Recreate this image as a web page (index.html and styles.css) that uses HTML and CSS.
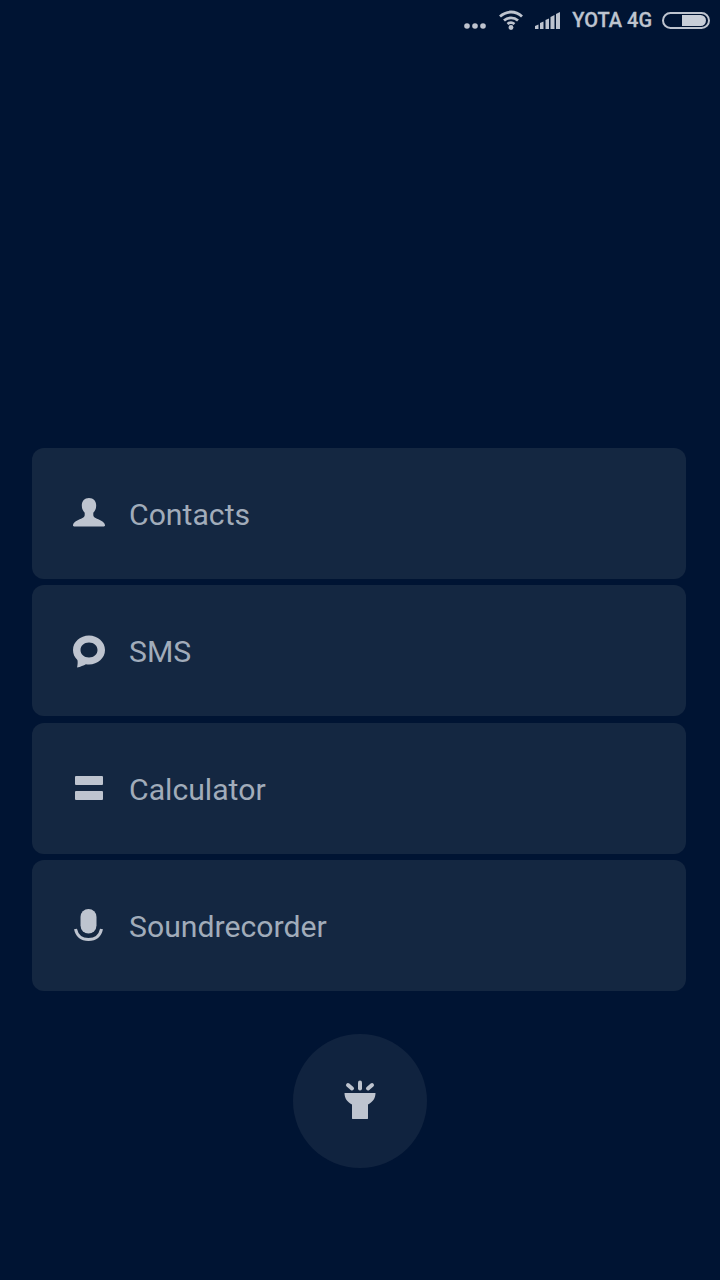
FILE: index.html
```html
<!DOCTYPE html>
<html lang="en">
<head>
  <meta charset="UTF-8">
  <title>Quick launch</title>
  <link rel="stylesheet" href="styles.css">
</head>
<body>
<div class="status">
  <svg class="st-dots" width="22" height="6" viewBox="0 0 22 6"><circle cx="3" cy="3" r="2.8"/><circle cx="11" cy="3" r="2.8"/><circle cx="19" cy="3" r="2.8"/></svg>
  <svg class="st-wifi" width="26" height="20" viewBox="0 0 26 20"><g class="wifi-arc"><path d="M2 6.500C8.500 .5 17.500 .5 24 6.500"/><path d="M6 10.500C10 7 16 7 20 10.500"/><path d="M9.500 14C11.500 12.500 14.500 12.500 16.500 14"/></g><circle cx="13" cy="17.500" r="2.400"/></svg>
  <svg class="st-signal" width="25" height="17" viewBox="0 0 25 17"><path d="M0 14L3.500 12.500V17H0z"/><path d="M5 11L8.500 9.500V17H5z"/><path d="M10.500 8L14 6.500V17H10.500z"/><path d="M15.500 5L19.500 3V17H15.500z"/><path d="M21 2L25 0V17H21z"/></svg>
  <span class="carrier">YOTA 4G</span>
  <div class="battery"><div class="battery-fill"></div></div>
</div>

<ul class="list">
  <li>
    <svg class="icon" width="40" height="40" viewBox="0 0 40 40"><path d="M20 4c-4.500 0-7.200 3.100-7.200 7.500 0 1.700.3 3.300 1 4.600.5 1 1.200 1.900 1.900 2.600v2.300c0 1.400-.9 2.300-2.300 3-3.300 1.800-8.500 3-9.400 6.900-.2.900.3 1.500 1.100 1.500h29.800c.8 0 1.300-.6 1.100-1.500-.9-3.900-6.100-5.100-9.400-6.900-1.400-.7-2.300-1.600-2.300-3v-2.300c.7-.7 1.400-1.600 1.900-2.600.7-1.300 1-2.900 1-4.600C27.200 7.100 24.500 4 20 4z"/></svg>
    <span>Contacts</span>
  </li>
  <li>
    <svg class="icon" width="40" height="40" viewBox="0 0 40 40"><path fill-rule="evenodd" d="M20 4.500c-8.800 0-16 6.500-16 14.500 0 3.900 1.500 7.300 4.400 10 .5 1.800.3 4.500-.3 7.500 3.500-.7 6.500-2 8.800-3.300 1 .2 2 .3 3.100.3 8.800 0 16-6.500 16-14.500S28.800 4.500 20 4.500zm0 7c5 0 8.500 3.300 8.500 7.500S25 26.500 20 26.500 11.500 23.200 11.500 19 15 11.500 20 11.500z"/></svg>
    <span>SMS</span>
  </li>
  <li>
    <svg class="icon" width="40" height="40" viewBox="0 0 40 40"><rect x="6" y="8" width="28" height="9" rx="1"/><rect x="6" y="23" width="28" height="9" rx="1"/></svg>
    <span>Calculator</span>
  </li>
  <li>
    <svg class="icon" width="40" height="40" viewBox="0 0 40 40"><rect x="11.500" y="4" width="16" height="24.500" rx="8"/><path class="mic-arc" d="M6.500 24C8 31 13 34.500 19.500 34.500S31 31 32.500 24"/></svg>
    <span>Soundrecorder</span>
  </li>
</ul>

<div class="torch">
  <svg class="icon" width="40" height="44" viewBox="0 0 40 44"><g class="torch-rays"><path d="M8 6l4 3.500"/><path d="M20 3.500v6"/><path d="M32 6l-4 3.500"/></g><path d="M4.500 14h31c0 5-2.500 9-7.500 11.500V39.500c0 .3-.2.500-.5.500h-15c-.3 0-.5-.2-.5-.5V25.500C7 23 4.500 19 4.500 14z"/></svg>
</div>
</body>
</html>
```

FILE: styles.css
```css
body, div, ul, li {
  margin: 0;
  padding: 0;
}

ul {
  list-style-type: none;
}

body {
  width: 720px;
  height: 1280px;
  overflow: hidden;
  background: #001433;
  font-family: Roboto, "Liberation Sans", sans-serif;
}

.status {
  display: flex;
  justify-content: flex-end;
  align-items: center;
  height: 40px;
  padding-right: 10px;
  box-sizing: border-box;
  color: #bec4cf;
}

.status svg {
  fill: #bec4cf;
  flex: none;
}

.st-dots {
  margin: 11px 12px 0 0;
}

.st-wifi {
  margin: 0 11px 0 0;
}

.wifi-arc path {
  fill: none;
  stroke: #bec4cf;
  stroke-width: 2.8;
}

.st-signal {
  margin: 1px 12px 0 0;
}

.carrier {
  font-size: 20px;
  font-weight: 500;
  -webkit-text-stroke: 0.3px #bec4cf;
  line-height: 40px;
  margin-right: 10px;
}

.battery {
  display: flex;
  justify-content: flex-end;
  width: 48px;
  height: 17px;
  padding: 1px 2px;
  box-sizing: border-box;
  border: 2px solid #bec4cf;
  border-radius: 9px;
}

.battery-fill {
  width: 24px;
  background: #c8ced8;
  border-radius: 0 6px 6px 0;
}

.list {
  display: flex;
  flex-direction: column;
  gap: 6.33px;
  margin: 408px 34px 0 32px;
}

.list li {
  display: flex;
  align-items: center;
  gap: 20px;
  height: 131px;
  padding-left: 37px;
  background: #142741;
  border-radius: 12px;
  color: #a1acba;
  font-size: 30.2px;
}

.list li span {
  padding-top: 2px;
}

.icon {
  fill: #bec4cf;
  flex: none;
}

.mic-arc {
  fill: none;
  stroke: #bec4cf;
  stroke-width: 3;
}

.torch {
  display: flex;
  align-items: center;
  justify-content: center;
  width: 134px;
  height: 134px;
  margin: 43px auto 0;
  background: #10233f;
  border-radius: 50%;
}

.torch-rays path {
  fill: none;
  stroke: #bec4cf;
  stroke-width: 4;
  stroke-linecap: round;
}
```
